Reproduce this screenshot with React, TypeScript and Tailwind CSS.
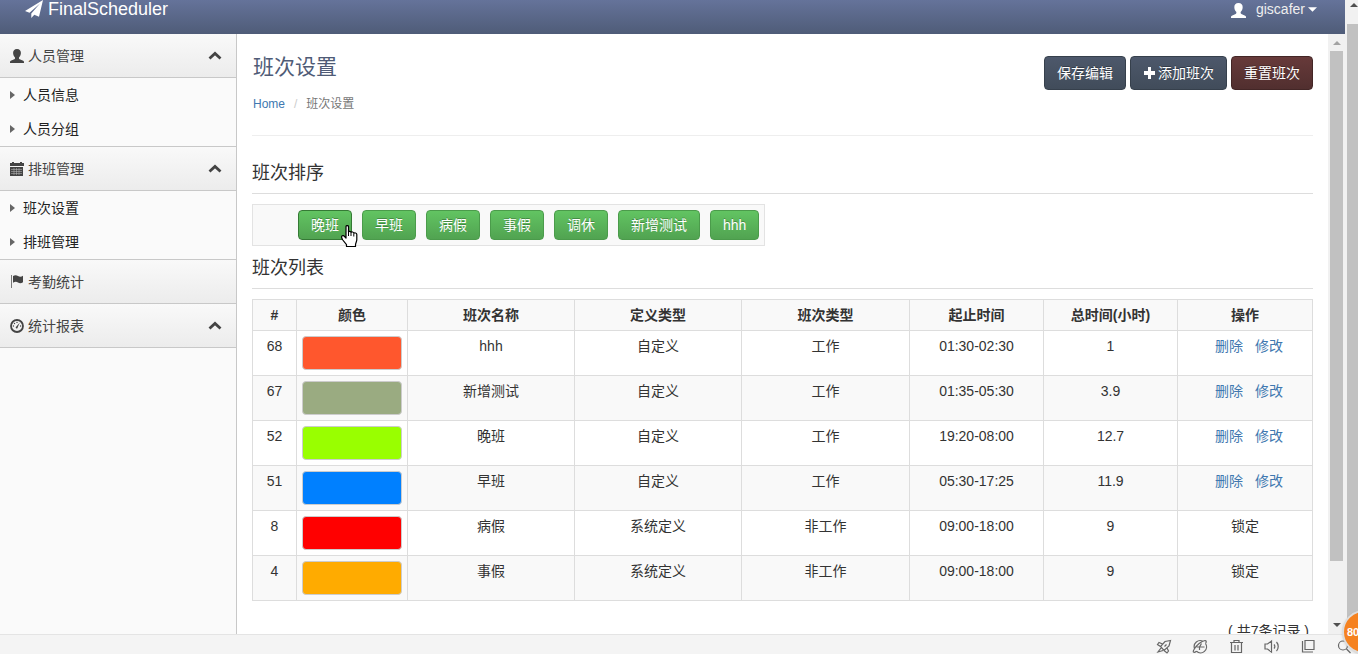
import { useState } from "react";
import type { ReactNode } from "react";
import clsx from "clsx";

type MenuItem = {
  label: string;
  icon: ReactNode;
  collapsible: boolean;
  children?: string[];
};

type Shift = {
  id: number;
  swatch: string;
  name: string;
  define: string;
  type: string;
  time: string;
  hours: string;
  locked?: boolean;
};

const shiftOrder = ["晚班", "早班", "病假", "事假", "调休", "新增测试", "hhh"];

const shifts: Shift[] = [
  { id: 68, swatch: "bg-[#ff572d]", name: "hhh", define: "自定义", type: "工作", time: "01:30-02:30", hours: "1" },
  { id: 67, swatch: "bg-[#9aab81]", name: "新增测试", define: "自定义", type: "工作", time: "01:35-05:30", hours: "3.9" },
  { id: 52, swatch: "bg-[#99ff00]", name: "晚班", define: "自定义", type: "工作", time: "19:20-08:00", hours: "12.7" },
  { id: 51, swatch: "bg-[#0080ff]", name: "早班", define: "自定义", type: "工作", time: "05:30-17:25", hours: "11.9" },
  { id: 8, swatch: "bg-[#ff0000]", name: "病假", define: "系统定义", type: "非工作", time: "09:00-18:00", hours: "9", locked: true },
  { id: 4, swatch: "bg-[#ffab00]", name: "事假", define: "系统定义", type: "非工作", time: "09:00-18:00", hours: "9", locked: true },
];

function UserIcon({ className }: { className?: string }) {
  return (
    <svg viewBox="0 0 14 14" className={className} fill="currentColor" aria-hidden="true">
      <path d="M7 0C4.400 0 3 1.700 3.100 4c.1 1.800.7 3.400 1.900 4.500v.9c0 .4-.3.7-.7.9L.8 11.800c-.5.2-.8.6-.8 1.100V14h14v-1.100c0-.5-.3-.9-.8-1.100L9.700 10.300c-.4-.2-.7-.5-.7-.9v-.9c1.200-1.100 1.800-2.700 1.900-4.500C11 1.700 9.600 0 7 0z" />
    </svg>
  );
}

function SendIcon() {
  return (
    <svg viewBox="0 0 18 18" className="h-[18px] w-[18px]" fill="currentColor" aria-hidden="true">
      <path d="M18 0 0 11l4.500 1.800L15 3.500 6.300 13.500V18l3-3.300 4.700 2z" />
    </svg>
  );
}

function CalendarIcon() {
  return (
    <svg viewBox="0 0 14 14" className="h-3.5 w-3.5" aria-hidden="true">
      <path d="M0 1h2V0h2v1h6V0h2v1h2v3H0zM0 5h13v9H0z" fill="currentColor" />
      <path d="M1 7.500h11M1 9.500h11M1 11.500h11M4 6v7M6.500 6v7M9 6v7" stroke="#f2f2f2" strokeWidth="0.500" opacity="0.700" />
    </svg>
  );
}

function FlagIcon() {
  return (
    <svg viewBox="0 0 14 14" className="h-3.5 w-3.5" fill="currentColor" aria-hidden="true">
      <path d="M1 0h1v13H1z" opacity="0.700" />
      <path d="M3 1c2-1.200 3.600-.8 5 0s3.200 1 5-.2v6.400c-1.800 1.300-3.600 1.200-5 .3s-3-1-5 .3z" />
    </svg>
  );
}

function DashboardIcon() {
  return (
    <svg viewBox="0 0 14 14" className="h-3.5 w-3.5" aria-hidden="true">
      <circle cx="7" cy="7" r="6" fill="none" stroke="currentColor" strokeWidth="1.800" />
      <path d="M9.800 3.500 7.700 8.300a1 1 0 1 1-1.300-.7z" fill="currentColor" />
      <g fill="currentColor">
        <circle cx="3.400" cy="7" r=".7" />
        <circle cx="4.500" cy="4.500" r=".7" />
        <circle cx="7" cy="3.400" r=".7" />
        <circle cx="10.600" cy="7" r=".7" />
      </g>
    </svg>
  );
}

function ChevronIcon({ open }: { open: boolean }) {
  return (
    <svg viewBox="0 0 14 10" className={clsx("h-2.5 w-3.5", !open && "rotate-180")} aria-hidden="true">
      <path d="m1.500 7.500 5.500-5 5.500 5" fill="none" stroke="currentColor" strokeWidth="2.800" />
    </svg>
  );
}

function Arrow({ down, className }: { down?: boolean; className?: string }) {
  return (
    <svg viewBox="0 0 8 4" className={clsx("shrink-0", className)} fill="currentColor" aria-hidden="true">
      <path d={down ? "M0 0h8L4 4z" : "M0 4h8L4 0z"} />
    </svg>
  );
}

function HandPointer() {
  return (
    <svg viewBox="0 0 17 23" className="pointer-events-none absolute top-[15px] left-[43px] z-10 h-[23px] w-[17px]" aria-hidden="true">
      <path
        d="M5 1.500c0-1.300 2.500-1.300 2.500 0V7c.3-.9 2.500-.8 2.500.5.500-.9 2.800-.6 2.800.8.600-.8 3-.5 3 1.200v5c0 2.500-1.300 3.500-1.300 5.500v1.500H5.500v-1.800L1.800 15c-.8-1.300-1.600-3-1-3.800.8-.9 2-.6 2.700.3L5 13z"
        fill="#fff"
        stroke="#000"
        strokeWidth="1.200"
        strokeLinejoin="round"
      />
      <path d="M7.500 7v4M10 8v3M12.800 9v2.500" stroke="#000" strokeWidth="1" />
    </svg>
  );
}

const menu: MenuItem[] = [
  { label: "人员管理", icon: <UserIcon className="h-3.5 w-3.5" />, collapsible: true, children: ["人员信息", "人员分组"] },
  { label: "排班管理", icon: <CalendarIcon />, collapsible: true, children: ["班次设置", "排班管理"] },
  { label: "考勤统计", icon: <FlagIcon />, collapsible: false },
  { label: "统计报表", icon: <DashboardIcon />, collapsible: true },
];

function Sidebar() {
  const [closed, setClosed] = useState<string[]>([]);

  function toggle(label: string) {
    setClosed(closed.includes(label) ? closed.filter((l) => l !== label) : [...closed, label]);
  }

  return (
    <nav className="w-[237px] shrink-0 border-r border-[#c8c8c8] bg-[#fafafa]">
      {menu.map((item) => (
        <div key={item.label}>
          <button
            type="button"
            onClick={() => toggle(item.label)}
            className="flex h-11 w-full items-center gap-1 border-b border-[#c8c8c8] bg-linear-to-b from-[#f9f9f9] to-[#ececec] pr-3.5 pl-2.5 text-[#444]"
          >
            {item.icon}
            <span className="flex-1 text-left">{item.label}</span>
            {item.collapsible && <ChevronIcon open={!closed.includes(item.label)} />}
          </button>
          {item.children && !closed.includes(item.label) && (
            <ul className="border-b border-[#c8c8c8]">
              {item.children.map((child) => (
                <li key={child}>
                  <a href="#" className="flex h-[34px] items-center gap-2 pl-2.5 text-[#222]">
                    <svg viewBox="0 0 5 8" className="h-2 w-[5px]" fill="#666" aria-hidden="true">
                      <path d="M0 0v8l5-4z" />
                    </svg>
                    {child}
                  </a>
                </li>
              ))}
            </ul>
          )}
        </div>
      ))}
    </nav>
  );
}

function ActionButton({ danger, children }: { danger?: boolean; children: ReactNode }) {
  return (
    <button
      type="button"
      className={clsx(
        "flex h-[34px] items-center gap-0.5 rounded border px-3 text-white text-shadow-[0_-1px_0_rgb(0_0_0/0.3)]",
        danger
          ? "border-[#432626] bg-linear-to-b from-[#673a3a] to-[#512f2f]"
          : "border-[#36404c] bg-linear-to-b from-[#4d586b] to-[#414c5a]"
      )}
    >
      {children}
    </button>
  );
}

function ShiftTable() {
  return (
    <table className="mt-2.5 w-full table-fixed border-collapse border border-[#ddd] text-center">
      <colgroup>
        <col className="w-[44px]" />
        <col className="w-[111px]" />
        <col className="w-[167px]" />
        <col className="w-[167px]" />
        <col className="w-[168px]" />
        <col className="w-[134px]" />
        <col className="w-[134px]" />
        <col className="w-[135px]" />
      </colgroup>
      <thead>
        <tr className="bg-[#f9f9f9]">
          {["#", "颜色", "班次名称", "定义类型", "班次类型", "起止时间", "总时间(小时)", "操作"].map((head) => (
            <th key={head} className="border border-[#ddd] p-[5px] font-bold">
              {head}
            </th>
          ))}
        </tr>
      </thead>
      <tbody>
        {shifts.map((shift) => (
          <tr key={shift.id} className="align-top even:bg-[#f9f9f9]">
            <td className="border border-[#ddd] p-[5px]">{shift.id}</td>
            <td className="border border-[#ddd] p-[5px]">
              <input
                type="text"
                readOnly
                aria-label={`${shift.name}颜色`}
                className={clsx("block h-[34px] w-full rounded border border-[#ccc]", shift.swatch)}
              />
            </td>
            <td className="border border-[#ddd] p-[5px]">{shift.name}</td>
            <td className="border border-[#ddd] p-[5px]">{shift.define}</td>
            <td className="border border-[#ddd] p-[5px]">{shift.type}</td>
            <td className="border border-[#ddd] p-[5px]">{shift.time}</td>
            <td className="border border-[#ddd] p-[5px]">{shift.hours}</td>
            <td className="border border-[#ddd] p-[5px]">
              {shift.locked ? (
                "锁定"
              ) : (
                <div className="flex justify-center gap-3 pl-2 text-[#4078b0]">
                  <a href="#">删除</a>
                  <a href="#">修改</a>
                </div>
              )}
            </td>
          </tr>
        ))}
      </tbody>
    </table>
  );
}

function StatusBar() {
  return (
    <footer className="flex h-5 shrink-0 items-center justify-end gap-5 border-t border-[#e4e4e4] bg-[#f4f4f4] pt-1 pr-1.5 text-[#666]">
      <svg viewBox="0 0 16 15" className="h-[15px] w-4" fill="none" stroke="currentColor" strokeWidth="1.200" aria-hidden="true">
        <path d="M14.500 1.500 9 2.500 4.500 7.500l3.500 4 5-4.500zM6.500 5 3 3.500 1.500 5.500l3 2M8 11.500l3 2.500 1.500-2-1.500-3M5 9l-3 4 5-1.500" />
        <path d="m8.500 7.500 2-2" />
      </svg>
      <svg viewBox="0 0 16 15" className="h-[15px] w-4" fill="none" stroke="currentColor" strokeWidth="1.200" aria-hidden="true">
        <path d="M13.500 4.500a6 6 0 0 1-9 7.800M2.500 9.500A6 6 0 0 1 11 2.300M4.500 12.300C1.500 14.500.5 13 2 10.500 4.500 6 9.500 2 13 1.500c1.500 0 1.500 1.500.5 3M4.500 8h8M9.500 4.500 7.500 8v3" />
      </svg>
      <svg viewBox="0 0 16 15" className="h-[15px] w-4" fill="none" stroke="currentColor" strokeWidth="1.200" aria-hidden="true">
        <path d="M2 3.500h13M6 3V1.500h5V3M3.500 4v9.500h10V4M7 6v5.500M10 6v5.500" />
      </svg>
      <svg viewBox="0 0 16 15" className="h-[15px] w-4" fill="none" stroke="currentColor" strokeWidth="1.200" aria-hidden="true">
        <path d="M1 5v5h2.500L7.500 13V2L3.500 5zM10 5.500c1 1.200 1 2.800 0 4M12.500 3c2.300 2.500 2.300 6.500 0 9" />
      </svg>
      <svg viewBox="0 0 16 15" className="h-[15px] w-4" fill="none" stroke="currentColor" strokeWidth="1.200" aria-hidden="true">
        <path d="M5 1.500h9v9H5zM2.500 2v11H13" />
      </svg>
      <svg viewBox="0 0 16 15" className="h-[15px] w-4" fill="none" stroke="currentColor" strokeWidth="1.200" aria-hidden="true">
        <circle cx="7" cy="6.500" r="4.500" />
        <path d="m10.500 10 4 4" />
      </svg>
    </footer>
  );
}

export default function App() {
  return (
    <div className="relative flex h-screen flex-col overflow-hidden bg-white font-['Liberation_Sans','Noto_Sans_CJK_SC',sans-serif] text-sm leading-5 text-[#333]">
      <div className="flex min-h-0 flex-1">
        <div className="flex min-w-0 flex-1 flex-col">
          <header className="flex h-[34px] shrink-0 items-start justify-between bg-linear-to-b from-[#65739a] to-[#4f5c78] pr-7 pl-[25px] text-white">
            <a href="#" className="flex items-center gap-[5px] text-lg leading-[18px]">
              <SendIcon />
              FinalScheduler
            </a>
            <button type="button" className="flex items-center text-[#eee]">
              <UserIcon className="mt-0.5 mr-2.5 h-[15px] w-[15px] text-white" />
              <span className="mr-[3px] leading-[18px]">giscafer</span>
              <Arrow down className="h-[5px] w-[9px] text-white" />
            </button>
          </header>

          <div className="flex min-h-0 flex-1">
            <Sidebar />

            <main className="min-w-0 flex-1 overflow-hidden px-[15px]">
              <div className="flex items-start justify-between border-b border-[#eee] pt-[22px] pb-[21px]">
                <div className="pl-px">
                  <h1 className="text-[21px] leading-[22px] text-[#4f5b76]">班次设置</h1>
                  <ol className="mt-4 flex gap-[9px] text-xs leading-5">
                    <li>
                      <a href="#" className="text-[#4078b0]">
                        Home
                      </a>
                    </li>
                    <li className="text-[#ccc]">/</li>
                    <li className="text-[#777]">班次设置</li>
                  </ol>
                </div>
                <div className="flex gap-1">
                  <ActionButton>保存编辑</ActionButton>
                  <ActionButton>
                    <svg viewBox="0 0 13 13" className="h-[13px] w-[13px]" fill="currentColor" aria-hidden="true">
                      <path d="M5 0h3v4h4v4H8v4H5V8H1V4h4z" />
                    </svg>
                    添加班次
                  </ActionButton>
                  <ActionButton danger>重置班次</ActionButton>
                </div>
              </div>

              <h2 className="mt-[26px] border-b border-[#ddd] pb-[9px] text-lg leading-[22px]">班次排序</h2>
              <ul className="mt-2.5 flex w-fit gap-2.5 border border-[#e3e3e3] bg-[#f9f9f9] py-[5px] pr-[5px] pl-[45px]">
                {shiftOrder.map((name, index) => (
                  <li key={name} className="relative">
                    <button
                      type="button"
                      className={clsx(
                        "block h-[30px] rounded border bg-linear-to-b from-[#62c462] to-[#51a351] px-3 text-white text-shadow-[0_-1px_0_rgb(0_0_0/0.25)]",
                        index === 0 ? "border-[#357a35]" : "border-[#4b9b4b]"
                      )}
                    >
                      {name}
                    </button>
                    {index === 0 && <HandPointer />}
                  </li>
                ))}
              </ul>

              <h2 className="mt-[11px] border-b border-[#ddd] pb-[9px] text-lg leading-[22px]">班次列表</h2>
              <ShiftTable />
              <p className="mt-5 pr-1 text-right">( 共7条记录 )</p>
            </main>

            <div className="flex w-[17px] shrink-0 flex-col items-center bg-[#f1f1f1] py-[7px]">
              <Arrow className="h-1 w-2 text-[#a3a3a3]" />
              <div className="mt-1.5 mb-[62px] w-[13px] flex-1 bg-[#c1c1c1]" />
              <Arrow down className="h-1 w-2 text-[#505050]" />
            </div>
          </div>
        </div>

        <div className="flex w-[13px] shrink-0 flex-col items-end bg-[#f1f1f1] pt-[3px]">
          <Arrow className="h-1 w-2 text-[#505050]" />
          <div className="mt-[17px] w-[11px] flex-1 bg-[#c1c1c1]" />
        </div>
      </div>

      <StatusBar />

      {/* floating speed ball, half hidden behind the window edge */}
      <div className="absolute -right-7 bottom-0 flex h-11 w-11 items-center rounded-full border-2 border-[#ddd] bg-[#f58220] pl-[3px] text-[11px] font-bold text-white shadow">
        80
      </div>
    </div>
  );
}
